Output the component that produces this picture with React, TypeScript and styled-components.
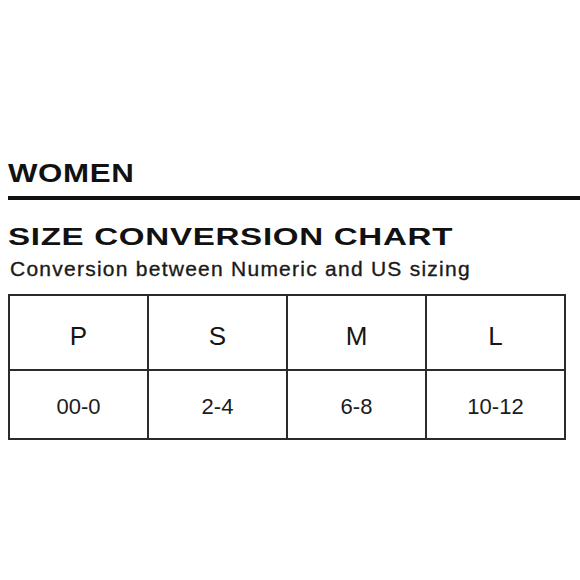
import React from 'react'
import styled, { createGlobalStyle } from 'styled-components'

const sizes = [
	{ label: 'P', range: '00-0' },
	{ label: 'S', range: '2-4' },
	{ label: 'M', range: '6-8' },
	{ label: 'L', range: '10-12' },
]

export default function App() {
	return (
		<>
			<GlobalStyle />
			<Page>
				<Section>
					<Heading $size={25} $stretch={1.25}>WOMEN</Heading>
					<Rule />
					<Heading $size={24} $stretch={1.38} $gap={23}>
						SIZE CONVERSION CHART
					</Heading>
					<Subtitle>Conversion between Numeric and US sizing</Subtitle>
					<Chart>
						<tbody>
							<tr>
								{sizes.map((s) => (
									<HeadCell key={s.label}>{s.label}</HeadCell>
								))}
							</tr>
							<tr>
								{sizes.map((s) => (
									<Cell key={s.label}>{s.range}</Cell>
								))}
							</tr>
						</tbody>
					</Chart>
				</Section>
			</Page>
		</>
	)
}

const GlobalStyle = createGlobalStyle`
	body {
		margin: 0;
		background: #fff;
		font-family: 'Liberation Sans', Arial, sans-serif;
		color: #111;
	}
`

const Page = styled.div`
	width: 580px;
	height: 580px;
	padding-top: 159px;
	box-sizing: border-box;
	overflow: hidden;
`

const Section = styled.div`
	display: flex;
	flex-direction: column;
	padding-left: 8px;
`

const Heading = styled.h2<{ $size: number; $stretch: number; $gap?: number }>`
	margin: ${(p) => p.$gap ?? 0}px 0 0;
	font-size: ${(p) => p.$size}px;
	line-height: ${(p) => p.$size + 4}px;
	font-weight: 700;
	letter-spacing: 0.5px;
	color: #111;
	transform: scaleX(${(p) => p.$stretch});
	transform-origin: left center;
	white-space: nowrap;
`

const Rule = styled.div`
	margin-top: 8px;
	height: 4px;
	background: #111;
`

const Subtitle = styled.p`
	margin: 6px 0 0 2px;
	font-size: 21px;
	line-height: 24px;
	letter-spacing: 1.25px;
	color: #1a1a1a;
	-webkit-text-stroke: 0.35px #1a1a1a;
	white-space: nowrap;
`

const Chart = styled.table`
	margin-top: 13px;
	width: 558px;
	border-collapse: collapse;
	table-layout: fixed;
	border: 2px solid #2b2b2b;
`

const HeadCell = styled.td`
	border: 2px solid #2b2b2b;
	padding: 25px 0 18px;
	text-align: center;
	vertical-align: top;
	font-size: 26px;
	line-height: 30px;
	color: #151515;
`

const Cell = styled.td`
	border: 2px solid #2b2b2b;
	padding: 23px 0 18px;
	text-align: center;
	vertical-align: top;
	font-size: 22px;
	line-height: 26px;
	color: #1c1c1c;
`
